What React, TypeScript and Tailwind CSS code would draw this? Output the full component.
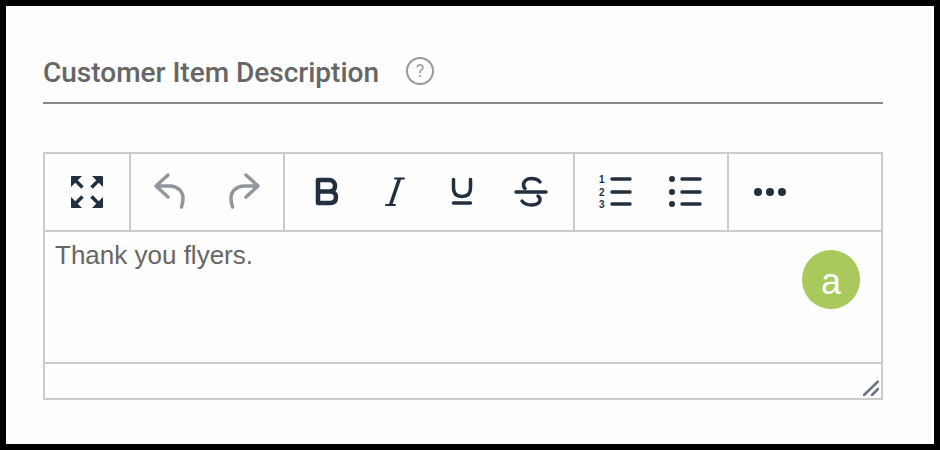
const DARK = '#222f3e';

const Btn = ({ children }: { children: React.ReactNode }) => (
  <div className="w-[68px] h-full flex items-center justify-center">
    <svg width="44" height="44" viewBox="0 0 44 44" fill="none" stroke={DARK} strokeWidth="3.5" strokeLinecap="round" strokeLinejoin="round" className="overflow-visible">
      {children}
    </svg>
  </div>
);

const Group = ({ children, last }: { children: React.ReactNode; last?: boolean }) => (
  <div className={`flex items-center px-2 h-full ${last ? '' : 'border-r-2 border-[#ccc]'}`}>{children}</div>
);

const UNDO = '#8f969e';

export default function App() {
  return (
    <div className="w-[940px] h-[450px] bg-black p-[6px]">
      <div className="w-full h-full bg-[#fefefe] pl-[37px] pr-[51px] pt-[48px]">
        <div className="h-[50px] border-b-2 border-[#888] flex items-start">
          <span className="text-[#666] text-[28px] leading-[38px] font-medium" style={{ fontFamily: 'Roboto, sans-serif' }}>
            Customer Item Description
          </span>
          <span className="ml-[27px] mt-[3px] w-[28px] h-[28px] rounded-full border-2 border-[#999] text-[#999] flex items-center justify-center text-[18px] leading-none" style={{ fontFamily: 'Roboto, sans-serif' }}>
            ?
          </span>
        </div>

        <div className="relative mt-[48px] h-[248px] border-2 border-[#ccc] flex flex-col">
          <div className="h-[78px] border-b-2 border-[#ccc] flex shrink-0">
            <Group>
              <Btn>
                <g fill={DARK} stroke="none">
                  <path d="M6 7a1 1 0 0 1 1-1h10L6 17z" />
                  <path d="M38 7a1 1 0 0 0-1-1H27l11 11z" />
                  <path d="M6 37a1 1 0 0 0 1 1h10L6 27z" />
                  <path d="M38 37a1 1 0 0 1-1 1H27l11-11z" />
                </g>
                <g strokeWidth="3.500" strokeLinecap="butt">
                  <path d="M9 9l8.500 8.500M35 9l-8.500 8.500M9 35l8.500-8.500M35 35l-8.500-8.500" />
                </g>
              </Btn>
            </Group>
            <Group>
              <Btn>
                <g stroke={UNDO}>
                  <path d="M17 5L5 16 17 27M5 16H19C26 16 32 21 32 28C32 31 31.500 34 30.500 37" />
                </g>
              </Btn>
              <Btn>
                <g stroke={UNDO}>
                  <path d="M27 5L39 16 27 27M39 16H25C18 16 12 21 12 28C12 31 12.500 34 13.500 37" />
                </g>
              </Btn>
            </Group>
            <Group>
              <Btn>
                <path strokeWidth="4.500" d="M13 10H24C28 10 30 12.500 30 16C30 19.500 28 21.500 24 21.500H13M13 21.500H25C29 21.500 31 24 31 27C31 31 29 33 25 33H13ZM13 10V33" />
              </Btn>
              <Btn>
                <path strokeWidth="2" d="M22 8.500H31M13 35H22" />
                <path strokeWidth="3.500" strokeLinecap="butt" d="M26.500 8.500L17.500 35" />
              </Btn>
              <Btn>
                <path d="M12.500 9.500V18C12.500 24 16 26.500 21 26.500C26 26.500 29.500 24 29.500 18V9.500M12.500 33H29.500" />
              </Btn>
              <Btn>
                <path d="M31 12C29 9.500 26 8.500 22.500 8.500C17.500 8.500 14.500 11 14.500 15C14.500 16.500 15 17.500 16 18.500M29 26C30.500 27 31 28 31 29.500C31 33 27.500 35 22.500 35C18.500 35 15 33.500 13 31" />
                <path d="M7 22H37" />
              </Btn>
            </Group>
            <Group>
              <Btn>
                <path d="M17 9H35M17 22H35M17 34H35" />
                <g fill={DARK} stroke="none" fontSize="10" fontWeight="700" style={{ fontFamily: '"Liberation Sans", sans-serif' }}>
                  <text x="4" y="13">1</text>
                  <text x="4" y="26">2</text>
                  <text x="4" y="38">3</text>
                </g>
              </Btn>
              <Btn>
                <path d="M19 9H37M19 22H37M19 34H37" />
                <g fill={DARK} stroke="none">
                  <circle cx="9" cy="9" r="3" />
                  <circle cx="9" cy="22" r="3" />
                  <circle cx="9" cy="34" r="3" />
                </g>
              </Btn>
            </Group>
            <Group last>
              <Btn>
                <g fill={DARK} stroke="none">
                  <circle cx="9" cy="22" r="4" />
                  <circle cx="21" cy="22" r="4" />
                  <circle cx="33" cy="22" r="4" />
                </g>
              </Btn>
            </Group>
          </div>

          <div className="flex-1 px-[10px] pt-[7px] text-[#666] text-[26px] leading-[32px]" style={{ fontFamily: '"Liberation Sans", Arial, sans-serif' }}>
            Thank you flyers.
          </div>

          <div className="h-[36px] shrink-0 border-t-2 border-[#ccc] flex justify-end items-end pr-[2px] pb-[2px]">
            <svg width="16" height="16" viewBox="0 0 16 16" fill="none" stroke="#6b7280" strokeWidth="2.500" strokeLinecap="round">
              <path d="M1 15L15 1.500M9 15l6-6" />
            </svg>
          </div>

          <div className="absolute left-[757px] top-[96px] w-[58px] h-[59px] rounded-full bg-[#a9c95c] flex items-center justify-center text-white text-[36px] leading-none pt-[4px]" style={{ fontFamily: '"Liberation Sans", Arial, sans-serif' }}>
            a
          </div>
        </div>
      </div>
    </div>
  );
}
